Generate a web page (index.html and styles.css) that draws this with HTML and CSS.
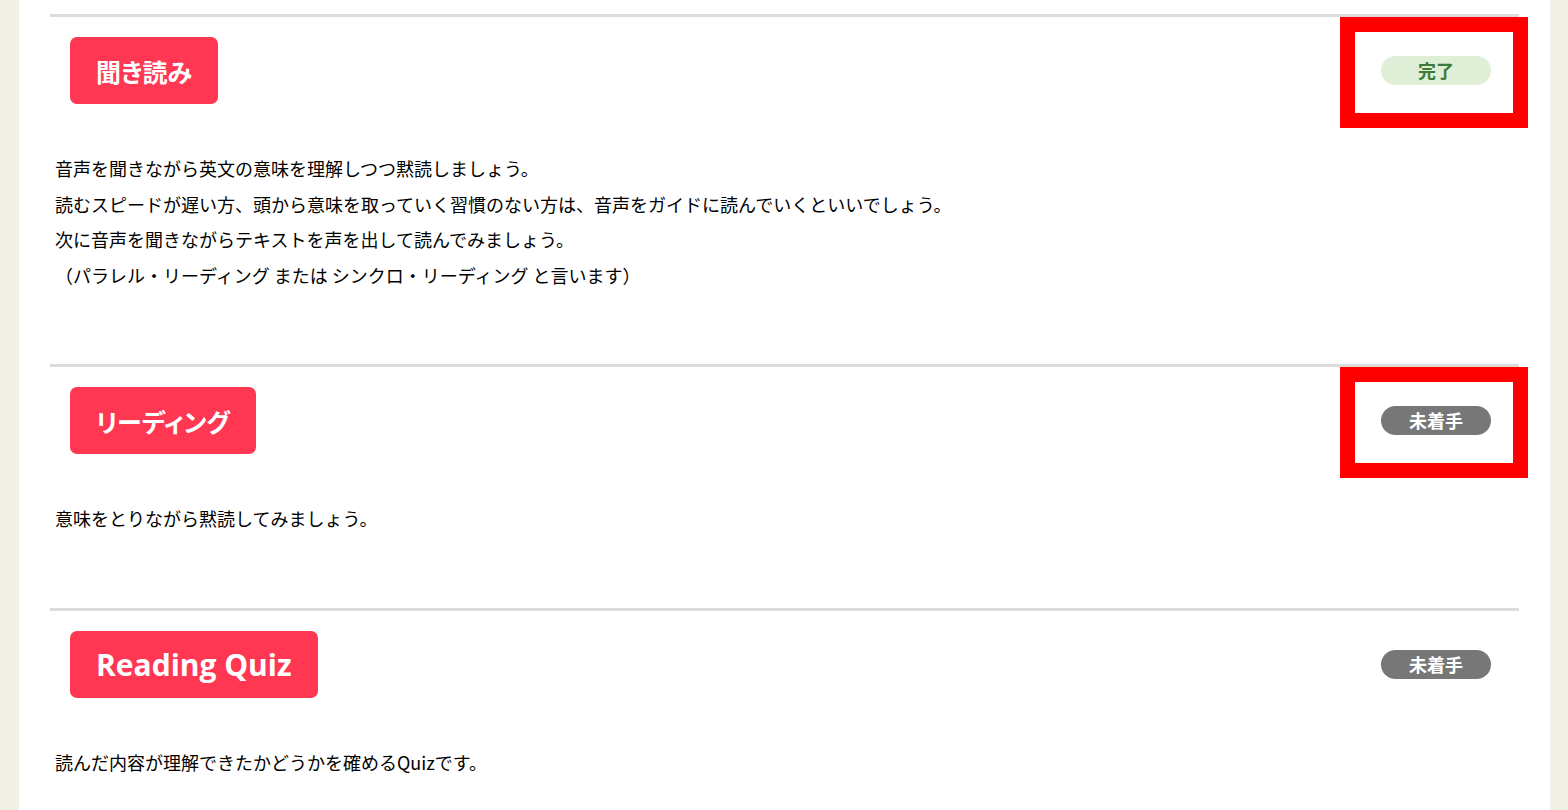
FILE: index.html
```html
<!DOCTYPE html>
<html lang="ja">

<head>
  <meta charset="UTF-8" />
  <meta name="viewport" content="width=device-width, initial-scale=1" />
  <title>レッスン</title>
  <link rel="stylesheet" href="styles.css">
</head>

<body>
  <div id="main">
    <section class="step">
      <div class="step-head">
        <button class="step-button">聞き読み</button>
        <span class="badge badge-done">完了<span class="mark"></span></span>
      </div>
      <p class="step-text">
        音声を聞きながら英文の意味を理解しつつ黙読しましょう。<br>
        読むスピードが遅い方、頭から意味を取っていく習慣のない方は、音声をガイドに読んでいくといいでしょう。<br>
        次に音声を聞きながらテキストを声を出して読んでみましょう。<br>
        （パラレル・リーディング または シンクロ・リーディング と言います）
      </p>
    </section>

    <section class="step">
      <div class="step-head">
        <button class="step-button">リーディング</button>
        <span class="badge badge-todo">未着手<span class="mark"></span></span>
      </div>
      <p class="step-text">意味をとりながら黙読してみましょう。</p>
    </section>

    <section class="step">
      <div class="step-head">
        <button class="step-button step-button-latin">Reading Quiz</button>
        <span class="badge badge-todo">未着手</span>
      </div>
      <p class="step-text">読んだ内容が理解できたかどうかを確めるQuizです。</p>
    </section>
  </div>
</body>

</html>
```

FILE: styles.css
```css
body {
  font-family: 'Noto Sans CJK JP', 'Noto Sans', sans-serif;
  background-color: #f1f0e7;
  color: #000;
  margin: 0;
  padding: 0 18px 0 19px;
}

#main {
  background-color: white;
  padding: 14px 31px 0 31px;
}

.step {
  border-top: 3px solid #dcdcdc;
  padding: 20px 28px 0 5px;
}

.step-head {
  display: flex;
  justify-content: space-between;
  align-items: center;
  padding-left: 15px;
}

.step-button {
  background: #ff3752;
  color: white;
  border: none;
  border-radius: 7px;
  height: 67px;
  padding: 0 26px;
  font-family: inherit;
  font-size: 25px;
  font-weight: bold;
  font-feature-settings: "palt";
  cursor: pointer;
}

.step-button-latin {
  font-family: 'Open Sans', 'Noto Sans', sans-serif;
  font-size: 30px;
}

.badge {
  position: relative;
  display: inline-block;
  width: 110px;
  height: 29px;
  line-height: 29px;
  border-radius: 15px;
  text-align: center;
  font-size: 18px;
  font-weight: bold;
}

.badge-done {
  background: #dfeed6;
  color: #3b7a38;
}

.badge-todo {
  background: #777777;
  color: white;
}

/* red annotation frame */
.mark {
  position: absolute;
  left: -41px;
  top: -39px;
  width: 158px;
  height: 81px;
  border: 15px solid #ff0000;
}

.step-text {
  font-size: 18px;
  line-height: 35.5px;
  margin: 47px 0 0 0;
  padding-bottom: 71px;
}
```
